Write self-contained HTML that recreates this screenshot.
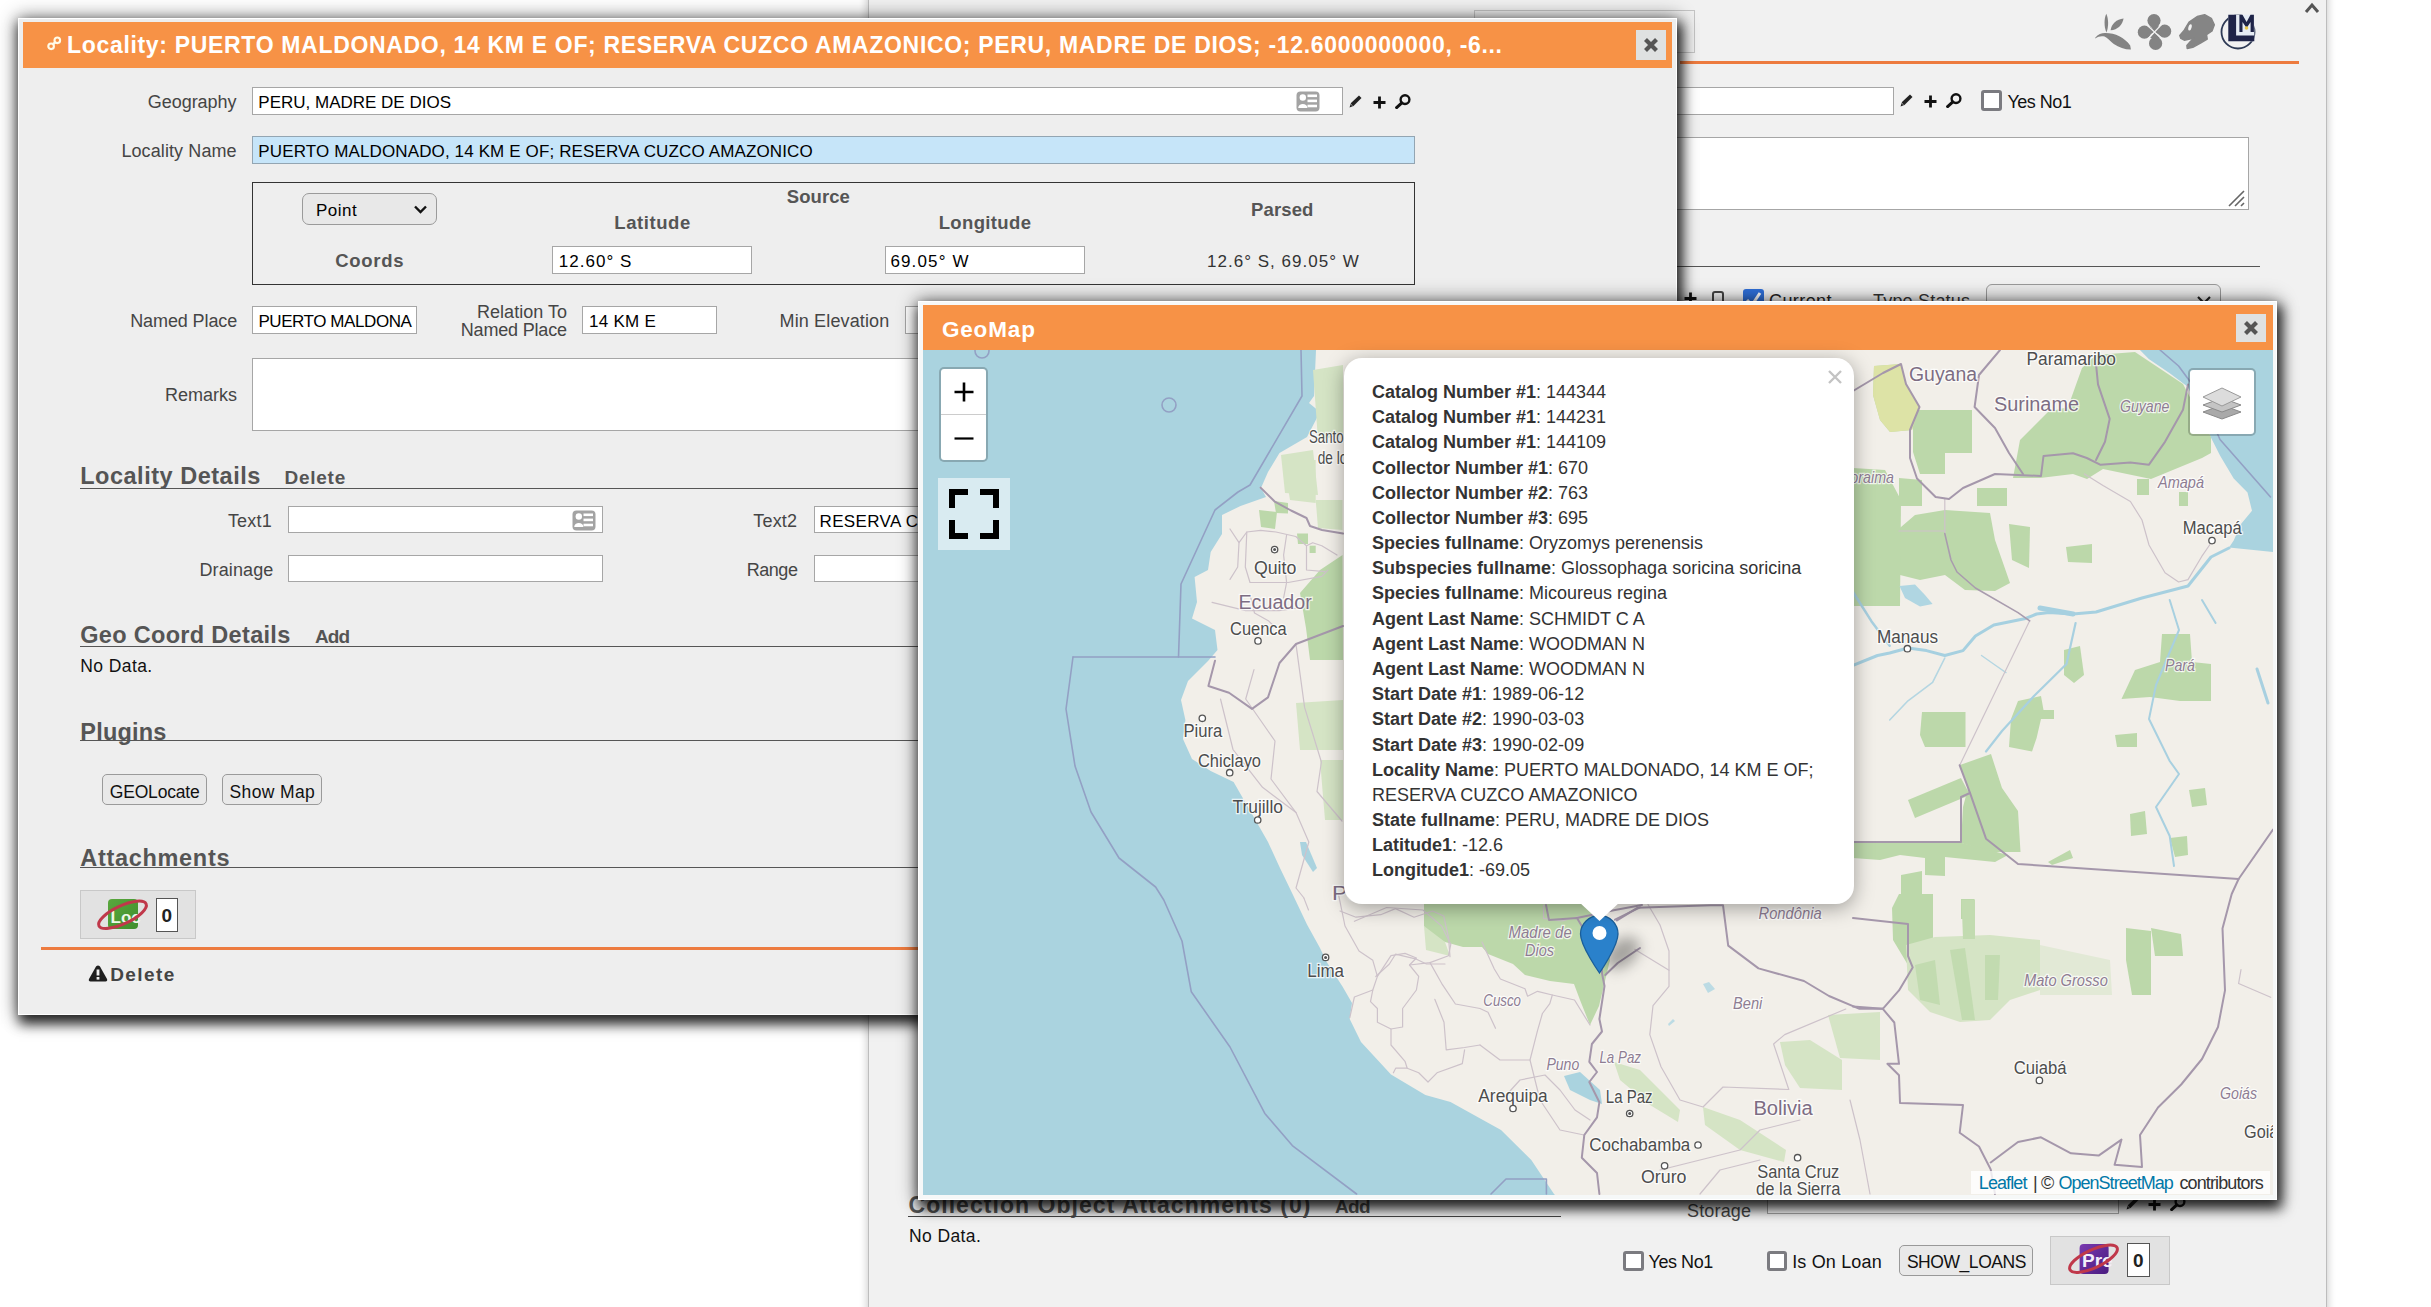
<!DOCTYPE html>
<html><head><meta charset="utf-8"><title>Specify</title>
<style>
html,body{margin:0;padding:0;width:2431px;height:1307px;overflow:hidden;background:#fff;}
body{position:relative;font-family:"Liberation Sans",sans-serif;}
.a{position:absolute;box-sizing:border-box;}
.t{position:absolute;white-space:pre;font-family:"Liberation Sans",sans-serif;}
</style></head><body>
<div class="a " style="left:867.5px;top:-10.0px;width:1459.5px;height:1330.0px;background:#f1f1f1;border-left:1.5px solid #bdbdbd;border-right:1.5px solid #bdbdbd;box-shadow:0 0 8px 1px rgba(0,0,0,0.2);"></div>
<div class="a " style="left:1474.0px;top:10.0px;width:221.0px;height:43.0px;border:1px solid #c4c4c4;background:#efefef;"></div>
<div class="a " style="left:1680.0px;top:61.0px;width:619.0px;height:2.5px;background:#ed7b3f;"></div>
<svg class="a" style="left:2304.0px;top:1.0px;" width="16.0" height="13.0" viewBox="0 0 16 13"><path d="M2 11 L8 4 L14 11" fill="none" stroke="#555" stroke-width="3"/></svg>
<svg class="a" style="left:2090.0px;top:8.0px;" width="90.0" height="47.0" viewBox="0 0 90 47"><g fill="#838383"><path d="M16.3 5.8 C18.6 11 18.8 19 16.4 24.6 C14 19 13.9 11 16.3 5.8 Z"/><path d="M20.6 22.3 C21.4 16 26.5 11 33.6 10.5 C32.4 17 27.6 21.8 20.6 22.3 Z"/><path d="M5.2 29.8 C8 26.2 12 25 15.2 25.1 C25 25 34.5 29.5 40.2 37.5 L40.9 41.5 C35 41.6 29 39.6 23.8 36 C20 33.2 17.2 29.6 14.6 28.6 C11 27.8 8 28.6 5.4 30.6 Z"/><circle cx="64" cy="12.6" r="6.6"/><circle cx="54.4" cy="24.2" r="6.6"/><circle cx="74.6" cy="23.2" r="6.6"/><circle cx="65.6" cy="35.4" r="6.6"/><path d="M58 14 L64.4 24 L70 15Z M60 18 L64.4 24 L56 29Z M68 17 L64.4 24 L73 29Z M60 30 L64.4 24 L70 30Z"/></g><path d="M57 17 L72 31 M71.5 16.5 L57.5 31.5" stroke="#f2f2f2" stroke-width="1.1"/></svg>
<svg class="a" style="left:2175.0px;top:8.0px;" width="90.0" height="47.0" viewBox="0 0 90 47"><path d="M4.8 27.4 L9.3 22.2 L14.1 14.1 L22.2 8.5 L29.6 6.7 L36.3 10.4 L39.3 16.7 L37 23 L31.5 26.7 L32.2 31.1 L25.9 34.8 L17.8 39.3 L12.2 40.4 L11.9 37.4 L15.6 33.3 L19.3 30 L9.3 32.2 L5.9 30.4 Z" fill="#858585" stroke="#858585" stroke-width="1.5" stroke-linejoin="round"/><ellipse cx="15" cy="19.4" rx="1.6" ry="3.2" transform="rotate(15 15 19.4)" fill="#f2f2f2"/><circle cx="63" cy="24" r="16.5" fill="none" stroke="#2e3a55" stroke-width="1.8"/><rect x="53.3" y="6.7" width="26" height="26.6" fill="#e6ecf4"/><path d="M53.3 6.7 H61.1 V27.4 H79.3 V33.3 H53.3 Z" fill="#1f2448"/><path d="M64.4 24 V6.7 H67.5 L71.6 14 L75.5 6.7 H78.9 V24 H75.6 V14 L71.6 20 L67.5 14 V24 Z" fill="#1f2448"/><circle cx="71.5" cy="20" r="1.8" fill="#e8c84a"/></svg>
<div class="a " style="left:1660.0px;top:87.0px;width:234.0px;height:28.0px;background:#fff;border:1px solid #a6a6a6;"></div>
<svg class="a" style="left:1899.0px;top:93.0px;" width="15.0" height="15.0" viewBox="0 0 15 15"><path d="M1.5 13.5 L3 9 L11 1.5 L13.5 4 L5.5 12 Z" fill="#222"/><path d="M3.2 10.5 L4.5 11.8" stroke="#eee" stroke-width="0.8"/></svg>
<svg class="a" style="left:1924.0px;top:95.0px;" width="13.0" height="13.0" viewBox="0 0 13 13"><path d="M6.5 0.5 V12.5 M0.5 6.5 H12.5" stroke="#111" stroke-width="2.8"/></svg>
<svg class="a" style="left:1946.0px;top:93.0px;" width="16.0" height="15.0" viewBox="0 0 16 15"><circle cx="10" cy="5.6" r="4.4" fill="none" stroke="#111" stroke-width="2.4"/><path d="M6.8 8.8 L1.6 13.6" stroke="#111" stroke-width="3" stroke-linecap="round"/></svg>
<div class="a " style="left:1981.0px;top:90.0px;width:21.0px;height:21.0px;border:3px solid #7b7b80;border-radius:3px;background:#fff;"></div>
<div class="t" style="left:2007.40px;top:91.80px;font-size:18.00px;line-height:20px;color:#111;letter-spacing:-0.499px;">Yes No1</div>
<div class="a " style="left:1660.0px;top:136.5px;width:589.0px;height:73.5px;background:#fff;border:1px solid #a6a6a6;"></div>
<svg class="a" style="left:2226.0px;top:188.0px;" width="20.0" height="20.0" viewBox="0 0 20 20"><path d="M3 18 L18 3 M9 18 L18 9 M15 18 L18 15" stroke="#666" stroke-width="1.6"/></svg>
<div class="a " style="left:1660.0px;top:265.5px;width:600.0px;height:1.5px;background:#555;"></div>
<svg class="a" style="left:1684.0px;top:292.0px;" width="13.0" height="13.0" viewBox="0 0 13 13"><path d="M6.5 0.5 V12.5 M0.5 6.5 H12.5" stroke="#111" stroke-width="2.8"/></svg>
<svg class="a" style="left:1710.0px;top:289.0px;" width="16.0" height="16.0" viewBox="0 0 16 16"><rect x="3" y="3" width="10" height="13" rx="2" fill="none" stroke="#444" stroke-width="2"/></svg>
<div class="a " style="left:1743.0px;top:289.0px;width:21.0px;height:21.0px;background:#2f6fd8;border-radius:3px;"></div>
<svg class="a" style="left:1743.0px;top:289.0px;" width="21.0" height="21.0" viewBox="0 0 21 21"><path d="M4 11 L9 16 L17 4" fill="none" stroke="#fff" stroke-width="3"/></svg>
<div class="t" style="left:1769.00px;top:290.50px;font-size:18.00px;line-height:20px;color:#222;letter-spacing:0.412px;">Current</div>
<div class="t" style="left:1873.00px;top:290.50px;font-size:18.00px;line-height:20px;color:#333;letter-spacing:0.194px;">Type Status</div>
<div class="a " style="left:1986.0px;top:284.0px;width:235.0px;height:32.0px;border:1px solid #999;border-radius:6px;background:#ebebeb;"></div>
<svg class="a" style="left:2196.0px;top:294.0px;" width="16.0" height="12.0" viewBox="0 0 16 12"><path d="M2 3 L8 9 L14 3" fill="none" stroke="#222" stroke-width="2.2"/></svg>
<div class="t" style="left:908.50px;top:1192.00px;font-size:23.00px;line-height:26px;color:#555555;font-weight:bold;letter-spacing:1.044px;">Collection Object Attachments (0)</div>
<div class="t" style="left:1335.00px;top:1196.00px;font-size:19.00px;line-height:21px;color:#555555;font-weight:bold;letter-spacing:-0.718px;">Add</div>
<div class="a " style="left:908.0px;top:1215.5px;width:653.0px;height:1.3px;background:#444;"></div>
<div class="t" style="left:909.00px;top:1226.30px;font-size:17.50px;line-height:20px;color:#111;letter-spacing:0.392px;">No Data.</div>
<div class="t" style="left:1687.00px;top:1201.00px;font-size:18.00px;line-height:20px;color:#454545;letter-spacing:0.161px;">Storage</div>
<div class="a " style="left:1766.7px;top:1186.0px;width:351.9px;height:27.5px;background:#fff;border:1px solid #a6a6a6;"></div>
<svg class="a" style="left:2125.0px;top:1196.0px;" width="15.0" height="15.0" viewBox="0 0 15 15"><path d="M1.5 13.5 L3 9 L11 1.5 L13.5 4 L5.5 12 Z" fill="#222"/><path d="M3.2 10.5 L4.5 11.8" stroke="#eee" stroke-width="0.8"/></svg>
<svg class="a" style="left:2148.0px;top:1198.0px;" width="13.0" height="13.0" viewBox="0 0 13 13"><path d="M6.5 0.5 V12.5 M0.5 6.5 H12.5" stroke="#111" stroke-width="2.8"/></svg>
<svg class="a" style="left:2170.0px;top:1196.0px;" width="16.0" height="15.0" viewBox="0 0 16 15"><circle cx="10" cy="5.6" r="4.4" fill="none" stroke="#111" stroke-width="2.4"/><path d="M6.8 8.8 L1.6 13.6" stroke="#111" stroke-width="3" stroke-linecap="round"/></svg>
<div class="a " style="left:1623.0px;top:1250.5px;width:20.5px;height:20.5px;border:3px solid #7b7b80;border-radius:3px;background:#fff;"></div>
<div class="t" style="left:1648.60px;top:1251.50px;font-size:18.00px;line-height:20px;color:#111;letter-spacing:-0.465px;">Yes No1</div>
<div class="a " style="left:1766.5px;top:1250.5px;width:20.5px;height:20.5px;border:3px solid #7b7b80;border-radius:3px;background:#fff;"></div>
<div class="t" style="left:1792.20px;top:1251.50px;font-size:18.00px;line-height:20px;color:#111;letter-spacing:0.160px;">Is On Loan</div>
<div class="a " style="left:1899.4px;top:1244.7px;width:133.9px;height:30.9px;border:1px solid #999;border-radius:5px;background:#e9e9e9;"></div>
<div class="t" style="left:1906.90px;top:1251.50px;font-size:17.50px;line-height:20px;color:#111;letter-spacing:-0.444px;">SHOW_LOANS</div>
<div class="a " style="left:2049.5px;top:1235.6px;width:120.2px;height:49.9px;border:1px solid #c8c8c8;background:#e2e2e2;"></div>
<svg class="a" style="left:2064.0px;top:1240.0px;" width="58.0" height="40.0" viewBox="0 0 58 40"><defs><linearGradient id="gp" x1="0" y1="0" x2="1" y2="1"><stop offset="0" stop-color="#7a3ab0"/><stop offset="1" stop-color="#4a1c80"/></linearGradient></defs><rect x="15.6" y="4" width="29" height="30" rx="4" fill="url(#gp)"/><text x="18" y="26.5" font-family="Liberation Sans" font-weight="bold" font-size="19" fill="#f4eefa">Pre</text><ellipse cx="29.5" cy="18.7" rx="26" ry="9" transform="rotate(-25 29.5 18.7)" fill="none" stroke="#c0384a" stroke-width="3"/></svg>
<div class="a " style="left:2127.2px;top:1243.4px;width:23.2px;height:34.1px;border:1.5px solid #555;background:#fff;"></div>
<div class="t" style="left:2133.00px;top:1250.00px;font-size:19.00px;line-height:21px;color:#222;font-weight:bold;">0</div>
<div class="a " style="left:18.0px;top:18.0px;width:1659.0px;height:997.0px;background:#eeeeee;border:1px solid #fff;box-shadow:0 0 18px 1px rgba(0,0,0,0.45), 3px 7px 12px 2px rgba(0,0,0,0.8);"></div>
<div class="a " style="left:23.0px;top:22.0px;width:1649.0px;height:46.0px;background:#f79246;"></div>
<svg class="a" style="left:44.0px;top:33.0px;" width="20.0" height="20.0" viewBox="0 0 20 20"><circle cx="7.1" cy="13.3" r="2.8" fill="none" stroke="#fffbe8" stroke-width="2.1"/><circle cx="13.3" cy="7.3" r="2.8" fill="none" stroke="#fffbe8" stroke-width="2.1"/><path d="M8.6 11.6 L11.6 8.9" stroke="#fffbe8" stroke-width="2.6"/></svg>
<div class="t" style="left:67.00px;top:32.00px;font-size:23.00px;line-height:26px;color:#fff;font-weight:bold;letter-spacing:0.677px;">Locality: PUERTO MALDONADO, 14 KM E OF; RESERVA CUZCO AMAZONICO; PERU, MADRE DE DIOS; -12.6000000000, -6...</div>
<div class="a " style="left:1636.0px;top:30.0px;width:30.0px;height:30.0px;background:#dfe1e1;"></div>
<svg class="a" style="left:1636.0px;top:30.0px;" width="30.0" height="30.0" viewBox="0 0 30 30"><path d="M9.5 9.5 L20.5 20.5 M20.5 9.5 L9.5 20.5" stroke="#555" stroke-width="4.2"/></svg>
<div class="t" style="left:147.70px;top:92.00px;font-size:18.00px;line-height:20px;color:#454545;letter-spacing:-0.021px;">Geography</div>
<div class="a " style="left:252.0px;top:87.0px;width:1091.0px;height:28.0px;background:#fff;border:1px solid #a6a6a6;"></div>
<div class="t" style="left:258.30px;top:93.00px;font-size:17.00px;line-height:19px;color:#000;">PERU, MADRE DE DIOS</div>
<svg class="a" style="left:1296.0px;top:91.0px;" width="24.0" height="21.0" viewBox="0 0 24 21"><rect x="0.5" y="0.5" width="23" height="20" rx="4" fill="#a3a3a3"/><circle cx="6.8" cy="6.5" r="3.2" fill="#fff"/><path d="M2.2 17 C2.2 11.5 11.4 11.5 11.4 17 Z" fill="#fff"/><rect x="11.5" y="3.5" width="9.5" height="2.6" fill="#fff"/><rect x="11.5" y="8.6" width="9.5" height="2.6" fill="#fff"/><rect x="11.5" y="13.7" width="9.5" height="2.6" fill="#fff"/></svg>
<svg class="a" style="left:1348.0px;top:94.0px;" width="15.0" height="15.0" viewBox="0 0 15 15"><path d="M1.5 13.5 L3 9 L11 1.5 L13.5 4 L5.5 12 Z" fill="#222"/><path d="M3.2 10.5 L4.5 11.8" stroke="#eee" stroke-width="0.8"/></svg>
<svg class="a" style="left:1373.0px;top:96.0px;" width="13.0" height="13.0" viewBox="0 0 13 13"><path d="M6.5 0.5 V12.5 M0.5 6.5 H12.5" stroke="#111" stroke-width="2.8"/></svg>
<svg class="a" style="left:1395.0px;top:94.0px;" width="16.0" height="15.0" viewBox="0 0 16 15"><circle cx="10" cy="5.6" r="4.4" fill="none" stroke="#111" stroke-width="2.4"/><path d="M6.8 8.8 L1.6 13.6" stroke="#111" stroke-width="3" stroke-linecap="round"/></svg>
<div class="t" style="left:121.40px;top:141.00px;font-size:18.00px;line-height:20px;color:#454545;letter-spacing:0.096px;">Locality Name</div>
<div class="a " style="left:252.0px;top:136.0px;width:1163.0px;height:28.0px;background:#c6e5f9;border:1px solid #93a5b2;"></div>
<div class="t" style="left:258.30px;top:142.00px;font-size:17.00px;line-height:19px;color:#000;letter-spacing:0.131px;">PUERTO MALDONADO, 14 KM E OF; RESERVA CUZCO AMAZONICO</div>
<div class="a " style="left:252.0px;top:182.0px;width:1163.0px;height:103.0px;border:1.5px solid #333;"></div>
<div class="a " style="left:302.0px;top:193.0px;width:135.0px;height:32.0px;border:1px solid #9a9a9a;border-radius:7px;background:#e8e8e8;"></div>
<div class="t" style="left:316.00px;top:201.00px;font-size:17.00px;line-height:19px;color:#000;letter-spacing:0.464px;">Point</div>
<svg class="a" style="left:413.0px;top:204.0px;" width="15.0" height="11.0" viewBox="0 0 15 11"><path d="M2 2.5 L7.5 8 L13 2.5" fill="none" stroke="#111" stroke-width="2.4"/></svg>
<div class="t" style="left:786.80px;top:186.40px;font-size:18.50px;line-height:21px;color:#555555;font-weight:bold;letter-spacing:0.057px;">Source</div>
<div class="t" style="left:614.30px;top:211.80px;font-size:18.50px;line-height:21px;color:#555555;font-weight:bold;letter-spacing:0.579px;">Latitude</div>
<div class="t" style="left:938.70px;top:212.00px;font-size:18.50px;line-height:21px;color:#555555;font-weight:bold;letter-spacing:0.363px;">Longitude</div>
<div class="t" style="left:1251.00px;top:199.00px;font-size:18.50px;line-height:21px;color:#555555;font-weight:bold;letter-spacing:0.141px;">Parsed</div>
<div class="t" style="left:335.20px;top:249.90px;font-size:18.50px;line-height:21px;color:#555555;font-weight:bold;letter-spacing:0.730px;">Coords</div>
<div class="a " style="left:552.0px;top:246.0px;width:200.0px;height:28.0px;background:#fff;border:1px solid #a6a6a6;"></div>
<div class="t" style="left:558.70px;top:252.30px;font-size:17.00px;line-height:19px;color:#000;letter-spacing:1.043px;">12.60° S</div>
<div class="a " style="left:885.0px;top:246.0px;width:200.0px;height:28.0px;background:#fff;border:1px solid #a6a6a6;"></div>
<div class="t" style="left:890.40px;top:252.20px;font-size:17.00px;line-height:19px;color:#000;letter-spacing:1.142px;">69.05° W</div>
<div class="t" style="left:1207.00px;top:252.20px;font-size:17.00px;line-height:19px;color:#333;letter-spacing:1.018px;">12.6° S, 69.05° W</div>
<div class="t" style="left:130.20px;top:311.10px;font-size:18.00px;line-height:20px;color:#454545;letter-spacing:-0.105px;">Named Place</div>
<div class="a " style="left:252.0px;top:306.0px;width:164.5px;height:27.5px;background:#fff;border:1px solid #a6a6a6;"></div>
<div class="t" style="left:258.40px;top:312.00px;font-size:17.00px;line-height:19px;color:#000;letter-spacing:-0.424px;">PUERTO MALDONA</div>
<div class="t" style="left:477.00px;top:301.70px;font-size:18.00px;line-height:20px;color:#454545;letter-spacing:0.027px;">Relation To</div>
<div class="t" style="left:460.80px;top:320.20px;font-size:18.00px;line-height:20px;color:#454545;letter-spacing:-0.185px;">Named Place</div>
<div class="a " style="left:582.0px;top:306.0px;width:135.0px;height:27.5px;background:#fff;border:1px solid #a6a6a6;"></div>
<div class="t" style="left:589.00px;top:312.00px;font-size:17.00px;line-height:19px;color:#000;letter-spacing:0.267px;">14 KM E</div>
<div class="t" style="left:779.60px;top:311.00px;font-size:18.00px;line-height:20px;color:#454545;letter-spacing:0.129px;">Min Elevation</div>
<div class="a " style="left:905.0px;top:306.0px;width:195.0px;height:27.5px;background:#fff;border:1px solid #a6a6a6;"></div>
<div class="t" style="left:165.00px;top:385.30px;font-size:18.00px;line-height:20px;color:#454545;">Remarks</div>
<div class="a " style="left:252.0px;top:357.5px;width:1163.0px;height:73.0px;background:#fff;border:1px solid #a6a6a6;"></div>
<div class="t" style="left:80.20px;top:463.40px;font-size:23.50px;line-height:26px;color:#555555;font-weight:bold;letter-spacing:0.520px;">Locality Details</div>
<div class="t" style="left:284.60px;top:467.40px;font-size:19.00px;line-height:21px;color:#555555;font-weight:bold;letter-spacing:0.716px;">Delete</div>
<div class="a " style="left:80.0px;top:487.5px;width:1570.0px;height:1.2px;background:#555;"></div>
<div class="t" style="left:227.90px;top:510.80px;font-size:18.00px;line-height:20px;color:#454545;letter-spacing:0.220px;">Text1</div>
<div class="a " style="left:288.0px;top:505.5px;width:315.0px;height:27.0px;background:#fff;border:1px solid #a6a6a6;"></div>
<svg class="a" style="left:572.0px;top:509.5px;" width="24.0" height="21.0" viewBox="0 0 24 21"><rect x="0.5" y="0.5" width="23" height="20" rx="4" fill="#a3a3a3"/><circle cx="6.8" cy="6.5" r="3.2" fill="#fff"/><path d="M2.2 17 C2.2 11.5 11.4 11.5 11.4 17 Z" fill="#fff"/><rect x="11.5" y="3.5" width="9.5" height="2.6" fill="#fff"/><rect x="11.5" y="8.6" width="9.5" height="2.6" fill="#fff"/><rect x="11.5" y="13.7" width="9.5" height="2.6" fill="#fff"/></svg>
<div class="t" style="left:753.20px;top:510.80px;font-size:18.00px;line-height:20px;color:#454545;letter-spacing:0.220px;">Text2</div>
<div class="a " style="left:814.0px;top:505.5px;width:316.0px;height:27.0px;background:#fff;border:1px solid #a6a6a6;"></div>
<div class="t" style="left:819.50px;top:511.80px;font-size:17.00px;line-height:19px;color:#000;letter-spacing:0.350px;">RESERVA CUZCO AMAZONICO</div>
<div class="t" style="left:199.50px;top:560.00px;font-size:18.00px;line-height:20px;color:#454545;letter-spacing:0.108px;">Drainage</div>
<div class="a " style="left:288.0px;top:554.5px;width:315.0px;height:27.0px;background:#fff;border:1px solid #a6a6a6;"></div>
<div class="t" style="left:746.80px;top:560.00px;font-size:18.00px;line-height:20px;color:#454545;letter-spacing:-0.486px;">Range</div>
<div class="a " style="left:814.0px;top:554.5px;width:316.0px;height:27.0px;background:#fff;border:1px solid #a6a6a6;"></div>
<div class="t" style="left:80.20px;top:622.40px;font-size:23.50px;line-height:26px;color:#555555;font-weight:bold;letter-spacing:0.318px;">Geo Coord Details</div>
<div class="t" style="left:314.90px;top:626.40px;font-size:19.00px;line-height:21px;color:#555555;font-weight:bold;letter-spacing:-0.868px;">Add</div>
<div class="a " style="left:80.0px;top:645.5px;width:1570.0px;height:1.2px;background:#555;"></div>
<div class="t" style="left:80.20px;top:655.80px;font-size:17.50px;line-height:20px;color:#111;letter-spacing:0.421px;">No Data.</div>
<div class="t" style="left:80.30px;top:718.70px;font-size:23.50px;line-height:26px;color:#555555;font-weight:bold;letter-spacing:0.207px;">Plugins</div>
<div class="a " style="left:80.0px;top:740.2px;width:1570.0px;height:1.2px;background:#555;"></div>
<div class="a " style="left:102.0px;top:774.2px;width:105.0px;height:31.3px;border:1px solid #9a9a9a;border-radius:5px;background:#e9e9e9;"></div>
<div class="t" style="left:109.80px;top:782.30px;font-size:17.50px;line-height:20px;color:#111;letter-spacing:-0.192px;">GEOLocate</div>
<div class="a " style="left:222.0px;top:774.2px;width:100.0px;height:31.3px;border:1px solid #9a9a9a;border-radius:5px;background:#e9e9e9;"></div>
<div class="t" style="left:229.50px;top:782.30px;font-size:17.50px;line-height:20px;color:#111;letter-spacing:0.373px;">Show Map</div>
<div class="t" style="left:80.30px;top:845.00px;font-size:23.50px;line-height:26px;color:#555555;font-weight:bold;letter-spacing:0.686px;">Attachments</div>
<div class="a " style="left:80.0px;top:867.2px;width:1570.0px;height:1.2px;background:#555;"></div>
<div class="a " style="left:80.3px;top:889.7px;width:115.7px;height:49.3px;border:1px solid #c8c8c8;background:#e2e2e2;"></div>
<svg class="a" style="left:93.0px;top:895.0px;" width="58.0" height="40.0" viewBox="0 0 58 40"><defs><linearGradient id="gl" x1="0" y1="0" x2="1" y2="1"><stop offset="0" stop-color="#5aa83e"/><stop offset="1" stop-color="#3f8f2c"/></linearGradient></defs><rect x="15" y="4" width="30" height="30" rx="4" fill="url(#gl)"/><text x="17.5" y="27.5" font-family="Liberation Sans" font-weight="bold" font-size="17" fill="#eef8e8">Loc</text><ellipse cx="29.5" cy="19.8" rx="26" ry="9" transform="rotate(-25 29.5 19.8)" fill="none" stroke="#c0384a" stroke-width="3"/></svg>
<div class="a " style="left:156.0px;top:898.0px;width:22.0px;height:34.0px;border:1.5px solid #555;background:#fff;"></div>
<div class="t" style="left:161.50px;top:905.00px;font-size:19.00px;line-height:21px;color:#222;font-weight:bold;">0</div>
<div class="a " style="left:41.0px;top:947.0px;width:1609.0px;height:3.0px;background:#ed7b3f;"></div>
<svg class="a" style="left:88.0px;top:964.0px;" width="20.0" height="18.0" viewBox="0 0 20 18"><path d="M10 1.5 C11.2 1.5 11.8 2.3 12.4 3.3 L19 15 C19.6 16.2 19 17.5 17.5 17.5 L2.5 17.5 C1 17.5 0.4 16.2 1 15 L7.6 3.3 C8.2 2.3 8.8 1.5 10 1.5Z" fill="#1e1e1e"/><rect x="8.6" y="5.5" width="2.8" height="6" fill="#eee"/><rect x="8.6" y="13" width="2.8" height="2.6" fill="#eee"/></svg>
<div class="t" style="left:110.20px;top:963.70px;font-size:19.00px;line-height:21px;color:#444;font-weight:bold;letter-spacing:1.436px;">Delete</div>
<div class="a " style="left:918.0px;top:301.0px;width:1359.0px;height:899.0px;background:#f6f8f8;border:1px solid #fff;box-shadow:0 0 18px 1px rgba(0,0,0,0.45), 3px 7px 12px 2px rgba(0,0,0,0.8);"></div>
<div class="a " style="left:923.0px;top:305.0px;width:1350.0px;height:45.0px;background:#f79246;"></div>
<div class="t" style="left:941.90px;top:316.90px;font-size:22.50px;line-height:25px;color:#fff;font-weight:bold;letter-spacing:0.848px;">GeoMap</div>
<div class="a " style="left:2236.0px;top:314.0px;width:30.0px;height:28.0px;background:#dfe1e1;"></div>
<svg class="a" style="left:2236.0px;top:314.0px;" width="30.0" height="28.0" viewBox="0 0 30 28"><path d="M9.5 8.5 L20.5 19.5 M20.5 8.5 L9.5 19.5" stroke="#555" stroke-width="4.2"/></svg>
<div class="a" style="left:923px;top:350px;width:1350px;height:844.5px;background:#aad3df;overflow:hidden;"><svg width="1350" height="845" viewBox="923 350 1350 845" style="display:block"><polygon points="1316,345 1316,350 1314,396 1309,403 1320,412 1307,437 1279.5,453 1268,472 1261,488 1266,497 1240.5,506 1222,515 1222,534 1210.7,552 1208,570 1194.6,577 1197,602 1192,618.5 1215,630 1217.5,650 1208,661 1188,681 1181,700 1185.4,720 1183,739 1192,759 1210.7,771 1233.6,782 1252,814 1268,842 1279.5,867 1293,895 1307,924.6 1320,948 1326.7,962 1342.8,987 1352,1003 1349.7,1019 1361,1042 1391,1074.4 1425.4,1095 1450.5,1102 1501,1130 1531.3,1160 1554,1194 1560,1200 2273,1200 2273,552 2229,547.5 2233.7,540.6 2240.6,524.5 2252,510.7 2247.5,492.4 2233.7,478.6 2220,455.6 2210.8,437.3 2187.8,386.7 2169.4,373 2148.8,359 2135,345" fill="#f2efe9" /><polygon points="1874,366 1901,364 1906,384 1919.5,407 1912,430 1890,432 1880,420 1873,395" fill="#bcd8aa" /><polygon points="1913,410 1972,410 1972,453 1945,453 1945,474 1920,474 1913,452" fill="#bcd8aa" /><polygon points="2013,478 2020,440 2048,412 2068,407 2082,368 2096,355 2135,352 2183,384 2211,437 2211,453 2202,458 2151,479 2103,469 2087,479 2073,474 2040,478" fill="#bcd8aa" /><polygon points="2137,479 2149,479 2149,495 2137,495" fill="#bcd8aa" /><polygon points="2179,492 2188,492 2188,506 2179,506" fill="#bcd8aa" /><polygon points="1977,488 2007,488 2007,506 1977,506" fill="#bcd8aa" /><polygon points="1894,533 1915,515 1945,510 1990,513 1995,540 2002,560 2010,583 1995,591 1965,590 1945,575 1920,580 1900,575" fill="#bcd8aa" /><polygon points="1853,468 1885,470 1901,500 1900,606 1853,606" fill="#bcd8aa" /><polygon points="2009,524 2030,527 2029,568 2012,560" fill="#bcd8aa" /><polygon points="2066,547 2092,544 2092,563 2068,562" fill="#bcd8aa" /><polygon points="1899,478 1922,480 1922,506 1899,506" fill="#bcd8aa" /><polygon points="1922,712 1965.5,712 1965.5,747 1925,747 1920,735" fill="#bcd8aa" /><polygon points="1908,800 1961,778 1970,795 1915,818" fill="#bcd8aa" /><polygon points="1960,765 1991,754 2002,788 2018,811 2020.5,852 1991,852 1961,843 1963,807 1968,788" fill="#bcd8aa" /><polygon points="1853,843 1962,843 2008,855 1995,862 1945,857 1945,876 1925,875 1925,858 1900,855 1880,860 1853,858" fill="#bcd8aa" /><polygon points="2018,701 2041,696 2043.5,710 2054,710 2054,719 2041,719 2036.6,738 2032,751.5 2009,747 2011,719" fill="#bcd8aa" /><polygon points="2064,650 2080,646 2084,675 2074,683 2064,675" fill="#bcd8aa" /><polygon points="2121.5,699 2135,670 2160,662 2162,634 2190,634 2192,662 2211,664 2211,701 2180,701 2150,697" fill="#bcd8aa" /><polygon points="2115,735 2137,733 2137,747 2117,747" fill="#bcd8aa" /><polygon points="2189,790 2205,788 2207,805 2192,807" fill="#bcd8aa" /><polygon points="2130,814 2145,811 2147,834 2131,836" fill="#bcd8aa" /><polygon points="2170,838 2187,836 2188,855 2175,857" fill="#bcd8aa" /><polygon points="2048,862 2070,850 2073,858 2052,865" fill="#bcd8aa" /><polygon points="1901,875 1922,871 1922,900 1901,900" fill="#bcd8aa" /><polygon points="1892,908 1899,894 1933,894 1933,958 1908,965 1893,940" fill="#bcd8aa" /><polygon points="2126,928 2151,931 2151,995 2132,995 2126,960" fill="#bcd8aa" /><polygon points="2151,928 2181,934 2183,956 2155,956" fill="#bcd8aa" /><polygon points="1961,899 1974.6,899 1974.6,919 1961,919" fill="#bcd8aa" /><polygon points="1424,904 1590,904 1605,935 1610,960 1605,981 1599,1006 1590,1025 1580,1000 1574,984 1550,981 1525,975 1513,964 1488,954 1482,947 1463,947 1445,942 1429,936 1424,926" fill="#bcd8aa" /><polygon points="1342.5,555 1320,570 1300,593 1306,628 1310,660 1343,660" fill="#bcd8aa" /><polygon points="1274,501 1288,503 1288,513.6 1276,513" fill="#bcd8aa" /><polygon points="1297,533.5 1308,533.5 1308,544 1298,544" fill="#bcd8aa" /><polygon points="1309.6,545.7 1315.7,545.7 1315.7,553 1309.6,553" fill="#bcd8aa" /><polygon points="1259,510 1277,512 1275,529 1261,527" fill="#bcd8aa" /><polygon points="1874,366 1901,364 1906,384 1919.5,407 1912,430 1890,432 1880,420 1873,395" fill="#dde3a6" /><polygon points="2040,945 2110,960 2112,995 2040,995" fill="#e2e9d6" /><polygon points="1906,945 1935,937 1990,935 2040,940 2040,990 2010,1000 1990,1020 1960,1022 1930,1012 1908,990" fill="#d5e4c5" /><polygon points="1614,1062 1640,1070 1680,1110 1678,1122 1650,1105 1620,1080" fill="#d5e4c5" /><polygon points="1703,1107 1740,1120 1786,1150 1784,1162 1740,1150 1705,1125" fill="#d5e4c5" /><polygon points="1780,1042 1810,1040 1842,1060 1842,1090 1800,1088 1785,1065" fill="#d5e4c5" /><polygon points="1828,1015 1880,1012 1880,1060 1840,1058" fill="#d5e4c5" /><polygon points="1313,370 1343,365 1343,435 1318,440" fill="#d5e4c5" /><polygon points="1281,455 1313,450 1318,495 1285,493" fill="#d5e4c5" /><polygon points="1283.6,460 1315.7,460 1315.7,503 1290,500" fill="#d5e4c5" /><polygon points="1315.7,500 1342.5,500 1342.5,530 1318,528" fill="#d5e4c5" /><polygon points="1296,703 1343,700 1343,750 1300,750" fill="#d5e4c5" /><polygon points="1320,760 1343,760 1343,820 1325,820" fill="#d5e4c5" /><polygon points="1424,926 1445,942 1450,956 1426,950" fill="#d5e4c5" /><polygon points="1703,984 1709,982 1715,989 1708,993" fill="#bcdbe4" /><polygon points="1668,1024 1673,1019 1675,1021 1669,1026" fill="#bcdbe4" /><polygon points="1950,950 1965,948 1975,1020 1962,1020" fill="#c2dbb0" /><polygon points="1985,955 2000,955 1998,1000 1985,1000" fill="#c2dbb0" /><polygon points="1961.6,900 1975,900 1975,939 1963,939" fill="#c2dbb0" /><polygon points="1915,965 1935,960 1940,1005 1920,1000" fill="#c2dbb0" /><polygon points="1564,1076 1580,1072 1600,1090 1602,1104 1590,1100 1570,1090" fill="#aad3df" /><polygon points="1300,842 1306,842 1317,868 1313,872 1302,855" fill="#aad3df" /><polygon points="1899.5,586 1915,584.5 1925,595 1932.6,604 1920,606.5 1905,598" fill="#b0d6e2" /><polyline points="2229,548 2211,557 2188,586 2142,598 2096,612 2073,614 2049,612.6 2036.6,614 2024.4,618.8 1993.8,625 1975.4,636 1963,650.6 1944.8,655.5 1926.5,650.6 1908,648 1889.7,653 1877.5,655.5 1853,665.3" fill="none" stroke="#a6d0e0" stroke-width="3" stroke-linejoin="round" stroke-linecap="round" /><polyline points="2040,608 2073,614" fill="none" stroke="#a6d0e0" stroke-width="5" stroke-linejoin="round" stroke-linecap="round" /><polyline points="1853,592 1871.4,621.2 1889.7,645.7" fill="none" stroke="#a8d0e0" stroke-width="2.5" stroke-linejoin="round" stroke-linecap="round" /><polyline points="1944.8,658 1932.6,682.4 1908,700.8 1889.7,720" fill="none" stroke="#b4d6e2" stroke-width="1.6" stroke-linejoin="round" stroke-linecap="round" /><polyline points="1981.5,655.5 1995,665 2006,672.6" fill="none" stroke="#b4d6e2" stroke-width="1.4" stroke-linejoin="round" stroke-linecap="round" /><polyline points="2075.6,623 2066.5,664 2034,696 2002,731 1986,751.5" fill="none" stroke="#a8d0e0" stroke-width="2.2" stroke-linejoin="round" stroke-linecap="round" /><polyline points="2169.7,600 2179,630 2156,685 2149,719 2169.7,761 2179,774 2156,807 2169.7,836 2174,866" fill="none" stroke="#a8d0e0" stroke-width="2" stroke-linejoin="round" stroke-linecap="round" /><polyline points="2257,669 2268,703" fill="none" stroke="#a8d0e0" stroke-width="3" stroke-linejoin="round" stroke-linecap="round" /><polyline points="2202,600 2215.6,623" fill="none" stroke="#a8d0e0" stroke-width="2" stroke-linejoin="round" stroke-linecap="round" /><polyline points="2084.5,474 2103,485.5 2130.4,501.5 2142,520 2149,545 2165,572.7 2178.6,582 2188,579.6 2201.6,556.7 2211,543" fill="none" stroke="#cdc2ca" stroke-width="1.2" stroke-linejoin="round" stroke-linecap="round" /><polyline points="2029.7,620.7 1959.7,765.3" fill="none" stroke="#cdc2ca" stroke-width="1.2" stroke-linejoin="round" stroke-linecap="round" /><polyline points="1944.8,499 1944.8,533.6" fill="none" stroke="#cdc2ca" stroke-width="1.2" stroke-linejoin="round" stroke-linecap="round" /><polyline points="1899,531 1945,531" fill="none" stroke="#cdc2ca" stroke-width="1.2" stroke-linejoin="round" stroke-linecap="round" /><polyline points="1648,904.5 1660,925 1669,951 1669,986.4 1653,1005.7 1649.8,1034.6 1661,1066.7 1680,1100 1703,1107 1723,1087 1788.8,1089.5 1773.6,1044 1784.7,1034.6 1845.8,1009" fill="none" stroke="#cdc2ca" stroke-width="1.2" stroke-linejoin="round" stroke-linecap="round" /><polyline points="1635,949.4 1669,970.3" fill="none" stroke="#cdc2ca" stroke-width="1.2" stroke-linejoin="round" stroke-linecap="round" /><polyline points="2241,969.7 2238.6,983.5 2270.7,997.3" fill="none" stroke="#cdc2ca" stroke-width="1.2" stroke-linejoin="round" stroke-linecap="round" /><polyline points="1338.4,893.8 1345,926 1359,951 1372.8,960.3 1377.4,976.4 1372.8,990 1354.4,997 1349.8,1017.7" fill="none" stroke="#cdc2ca" stroke-width="1.2" stroke-linejoin="round" stroke-linecap="round" /><polyline points="1372.8,990 1370.5,1001.6 1377.4,1008.5 1377.4,1022.3 1391,1029 1402.6,1027 1402.6,1008.5 1416.4,990 1418.7,976.4 1409.5,965 1416.4,958 1405,953.4 1391,955.7 1377.4,976.4" fill="none" stroke="#cdc2ca" stroke-width="1.2" stroke-linejoin="round" stroke-linecap="round" /><polyline points="1409.5,965 1430,962.6 1448.5,955.7 1450.8,944.3 1441.6,926 1423,910 1386.6,907.5 1354.4,921.3" fill="none" stroke="#cdc2ca" stroke-width="1.2" stroke-linejoin="round" stroke-linecap="round" /><polyline points="1430,962.6 1441.6,983.3 1455.4,1004 1480,1008.5 1488,1012.2 1495.5,1028.3" fill="none" stroke="#cdc2ca" stroke-width="1.2" stroke-linejoin="round" stroke-linecap="round" /><polyline points="1434.8,999.3 1444,1022.3 1446.2,1049.8 1464.6,1047.5 1480,1045" fill="none" stroke="#cdc2ca" stroke-width="1.2" stroke-linejoin="round" stroke-linecap="round" /><polyline points="1391,1029 1391,1045 1405,1061.3 1407.2,1068.2 1395.7,1068.2 1393.4,1072.8" fill="none" stroke="#cdc2ca" stroke-width="1.2" stroke-linejoin="round" stroke-linecap="round" /><polyline points="1407.2,1068.2 1418.7,1072.8 1428,1082 1437,1072.8 1462.3,1063.6 1464.6,1049.8" fill="none" stroke="#cdc2ca" stroke-width="1.2" stroke-linejoin="round" stroke-linecap="round" /><polyline points="1304,898.4 1308.5,910" fill="none" stroke="#cdc2ca" stroke-width="1.2" stroke-linejoin="round" stroke-linecap="round" /><polyline points="1340,911 1356,917.2 1380.7,914.7 1395.5,908.6 1414,917.2 1432.6,911 1443.7,916 1448.6,938 1450,956.7" fill="none" stroke="#cdc2ca" stroke-width="1.2" stroke-linejoin="round" stroke-linecap="round" /><polyline points="1445,964 1426.4,964 1416.5,959.2 1395.5,954.2 1389.4,964 1375.8,976.5" fill="none" stroke="#cdc2ca" stroke-width="1.2" stroke-linejoin="round" stroke-linecap="round" /><polyline points="1482,942 1494.3,969 1500.4,979 1525,988.8 1527.6,996.2 1537.5,991.3 1552.3,995 1549.8,1003.6 1542.4,1013.5 1537.5,1030.7 1530,1060 1540,1100 1560,1130 1584,1135" fill="none" stroke="#cdc2ca" stroke-width="1.2" stroke-linejoin="round" stroke-linecap="round" /><polyline points="1552.3,995 1574.5,1000 1590,1025" fill="none" stroke="#cdc2ca" stroke-width="1.2" stroke-linejoin="round" stroke-linecap="round" /><polyline points="1543.6,905 1543.6,918.4 1562,921 1580.6,916" fill="none" stroke="#cdc2ca" stroke-width="1.2" stroke-linejoin="round" stroke-linecap="round" /><polyline points="1230,529 1239,542.7 1246.8,532 1260.6,530.4 1276,532 1295.8,536.5 1306.5,545.7 1312.7,542.7 1321.8,545.7 1337,555" fill="none" stroke="#cdc2ca" stroke-width="1.2" stroke-linejoin="round" stroke-linecap="round" /><polyline points="1246.8,532 1245.3,567 1250,582.5 1262,582.5 1288.2,582.5 1321.8,576.3 1328,570" fill="none" stroke="#cdc2ca" stroke-width="1.2" stroke-linejoin="round" stroke-linecap="round" /><polyline points="1286.6,535 1283.6,555 1286.6,582.5 1283.6,597.8" fill="none" stroke="#cdc2ca" stroke-width="1.2" stroke-linejoin="round" stroke-linecap="round" /><polyline points="1306.5,545.7 1306.5,570 1325,571.7" fill="none" stroke="#cdc2ca" stroke-width="1.2" stroke-linejoin="round" stroke-linecap="round" /><polyline points="1239,542.7 1237.7,567 1230,579.4" fill="none" stroke="#cdc2ca" stroke-width="1.2" stroke-linejoin="round" stroke-linecap="round" /><polyline points="1250,594.7 1254.5,613 1268.3,620.7 1276,628.4" fill="none" stroke="#cdc2ca" stroke-width="1.2" stroke-linejoin="round" stroke-linecap="round" /><polyline points="1212,602.3 1245.7,610.7 1279,610.7 1309,606.5" fill="none" stroke="#cdc2ca" stroke-width="1.2" stroke-linejoin="round" stroke-linecap="round" /><polyline points="1254,669.6 1245.7,699 1275,741 1271,779 1296,812.6 1308.8,842 1296,888 1304,898" fill="none" stroke="#cdc2ca" stroke-width="1.2" stroke-linejoin="round" stroke-linecap="round" /><polyline points="1220.5,699 1233,749.5 1262.5,787.3 1296,812.6" fill="none" stroke="#cdc2ca" stroke-width="1.2" stroke-linejoin="round" stroke-linecap="round" /><polyline points="1296,644.4 1304.6,707.4 1321.4,762 1317,791.5 1342,821" fill="none" stroke="#cdc2ca" stroke-width="1.2" stroke-linejoin="round" stroke-linecap="round" /><polyline points="1500,1102 1520,1080 1545,1075 1560,1090 1575,1110 1590,1120" fill="none" stroke="#cdc2ca" stroke-width="1.2" stroke-linejoin="round" stroke-linecap="round" /><polyline points="1480,1045 1500,1060 1530,1060" fill="none" stroke="#cdc2ca" stroke-width="1.2" stroke-linejoin="round" stroke-linecap="round" /><polyline points="1660,1170 1700,1160 1740,1150 1760,1130 1800,1120" fill="none" stroke="#cdc2ca" stroke-width="1.2" stroke-linejoin="round" stroke-linecap="round" /><polyline points="1700,1194 1720,1170 1760,1160" fill="none" stroke="#cdc2ca" stroke-width="1.2" stroke-linejoin="round" stroke-linecap="round" /><polyline points="1850,1100 1860,1140 1870,1194" fill="none" stroke="#cdc2ca" stroke-width="1.2" stroke-linejoin="round" stroke-linecap="round" /><polyline points="1853,391 1883,373 1901,364 1906,384 1919.5,407 1910,430 1910,458 1917,478.5 1935.6,497 1949,499 1963,488 1995,474 2018,475 2041,476 2043.5,456 2073,453.3 2086.8,458 2100.6,464.8 2130.4,462.5 2148.8,464.8 2165,441.8 2183,409.7 2188,384.4" fill="none" stroke="#a597ab" stroke-width="2" stroke-linejoin="round" stroke-linecap="round" /><polyline points="2000,350 1979,375 1974.6,407 1995,428 2009,453 2023,474" fill="none" stroke="#a597ab" stroke-width="2" stroke-linejoin="round" stroke-linecap="round" /><polyline points="2096,363.8 2098,384.4 2109.7,418.9 2105,441.8 2096,460" fill="none" stroke="#a597ab" stroke-width="2" stroke-linejoin="round" stroke-linecap="round" /><polyline points="1959.7,765.3 1970,792.8 1986,838.7 2018,864 2238.6,879 2273,829.5" fill="none" stroke="#a597ab" stroke-width="2" stroke-linejoin="round" stroke-linecap="round" /><polyline points="1853,842 1961,842 1961,797 1970,793" fill="none" stroke="#a597ab" stroke-width="2" stroke-linejoin="round" stroke-linecap="round" /><polyline points="1853,918 1908,924 1908,956 1912.7,967.4 1899,990.4 1882.8,1008.8 1853,1006.5" fill="none" stroke="#a597ab" stroke-width="2" stroke-linejoin="round" stroke-linecap="round" /><polyline points="1882.8,1008.8 1894.3,1022.5 1899,1063.8 1887.4,1063.8 1899,1075.3 1900,1103 1963,1105 1959.7,1132.7 1979,1146.5 1990.7,1169.4 1995,1194" fill="none" stroke="#a597ab" stroke-width="2" stroke-linejoin="round" stroke-linecap="round" /><polyline points="1990.7,1162.5 2018,1142 2041,1137.3 2071,1153.3 2098.6,1155.6 2121.5,1139.6 2114.6,1164.8 2142,1167 2140,1135 2158,1107.5 2181.2,1084.5 2202,1059 2218,1027 2225,990.4 2222.5,928.4 2231.7,894 2238.6,879" fill="none" stroke="#a597ab" stroke-width="2" stroke-linejoin="round" stroke-linecap="round" /><polyline points="1617,920.4 1637.3,907.8 1710.5,905.2 1723,905.2 1728.2,945.6 1758.5,968.4 1804,981 1829,996 1859.5,1008.8 1882.8,1008.8" fill="none" stroke="#a597ab" stroke-width="2" stroke-linejoin="round" stroke-linecap="round" /><polyline points="1546,905 1549,920 1577,918 1602,960 1602,973.4 1604.5,986 1599.4,1019 1602,1031.5 1591.9,1044 1589.3,1061.8 1597,1072 1589.3,1082 1599.4,1102.2 1597,1117.3 1584.3,1135 1581.8,1157.7 1597,1173 1599.4,1194" fill="none" stroke="#a597ab" stroke-width="2" stroke-linejoin="round" stroke-linecap="round" /><polyline points="1577,918 1615,910 1642,905" fill="none" stroke="#a597ab" stroke-width="2" stroke-linejoin="round" stroke-linecap="round" /><polyline points="1260.6,487.6 1274.4,501.3 1291,510.5 1306.5,518 1310,526 1322,530 1343,533.5" fill="none" stroke="#a597ab" stroke-width="2" stroke-linejoin="round" stroke-linecap="round" /><polyline points="1215,660.7 1208.4,686 1229,692.8 1252,708.9 1268,697.4 1279.5,663 1296,644 1343,626" fill="none" stroke="#a597ab" stroke-width="2" stroke-linejoin="round" stroke-linecap="round" /><polyline points="1615,919.7 1640,907.3" fill="none" stroke="#a597ab" stroke-width="2" stroke-linejoin="round" stroke-linecap="round" /><polyline points="1605.3,975 1617.7,963 1640,948" fill="none" stroke="#a597ab" stroke-width="2" stroke-linejoin="round" stroke-linecap="round" /><polyline points="1944.8,533.6 1951,560 1957,572 1975.4,588 2018,612.6 2029.7,620.8" fill="none" stroke="#a99cae" stroke-width="1.6" stroke-linejoin="round" stroke-linecap="round" /><polyline points="1301,350 1302,396 1250,485 1238,492 1215,510 1181,584 1178.5,657" fill="none" stroke="#93a0c4" stroke-width="1.6" stroke-linejoin="round" stroke-linecap="round" /><polyline points="1073,657 1215,657" fill="none" stroke="#93a0c4" stroke-width="1.6" stroke-linejoin="round" stroke-linecap="round" /><polyline points="1073,657 1066,709 1075,766 1091,812 1119,858 1155.6,887 1163.8,900 1182,941 1191.3,991.8 1230,1047 1264.8,1113.4 1292.3,1145.6 1356.6,1194" fill="none" stroke="#93a0c4" stroke-width="1.6" stroke-linejoin="round" stroke-linecap="round" /><polyline points="1491,1194 1506,1179 1546.4,1179 1546.4,1194" fill="none" stroke="#93a0c4" stroke-width="1.6" stroke-linejoin="round" stroke-linecap="round" /><polyline points="2160,350 2178.6,366 2200,395 2220,439.5 2270.5,497" fill="none" stroke="#93a0c4" stroke-width="1.6" stroke-linejoin="round" stroke-linecap="round" /><circle cx="1169" cy="405" r="7" fill="none" stroke="#93a0c4" stroke-width="1.6"/><circle cx="982" cy="351" r="7" fill="none" stroke="#93a0c4" stroke-width="1.6"/><text x="1309" y="442.9" font-family="Liberation Sans" font-size="17.5" fill="#4d4d4d" stroke="#fff" stroke-width="2.5" stroke-opacity="0.75" paint-order="stroke" textLength="91" lengthAdjust="spacingAndGlyphs">Santo Domingo</text><text x="1317.7" y="463.5" font-family="Liberation Sans" font-size="17.5" fill="#4d4d4d" stroke="#fff" stroke-width="2.5" stroke-opacity="0.75" paint-order="stroke" textLength="102.3" lengthAdjust="spacingAndGlyphs">de los Colorados</text><text x="1254" y="573.7" font-family="Liberation Sans" font-size="17.5" fill="#4d4d4d" stroke="#fff" stroke-width="2.5" stroke-opacity="0.75" paint-order="stroke" textLength="42.3" lengthAdjust="spacingAndGlyphs">Quito</text><text x="1230" y="634.7" font-family="Liberation Sans" font-size="17.5" fill="#4d4d4d" stroke="#fff" stroke-width="2.5" stroke-opacity="0.75" paint-order="stroke" textLength="56.7" lengthAdjust="spacingAndGlyphs">Cuenca</text><text x="1183.4" y="736.5" font-family="Liberation Sans" font-size="17.5" fill="#4d4d4d" stroke="#fff" stroke-width="2.5" stroke-opacity="0.75" paint-order="stroke" textLength="38.9" lengthAdjust="spacingAndGlyphs">Piura</text><text x="1198" y="766.7" font-family="Liberation Sans" font-size="17.5" fill="#4d4d4d" stroke="#fff" stroke-width="2.5" stroke-opacity="0.75" paint-order="stroke" textLength="63" lengthAdjust="spacingAndGlyphs">Chiclayo</text><text x="1232.5" y="813.3" font-family="Liberation Sans" font-size="17.5" fill="#4d4d4d" stroke="#fff" stroke-width="2.5" stroke-opacity="0.75" paint-order="stroke" textLength="50.5" lengthAdjust="spacingAndGlyphs">Trujillo</text><text x="1307.2" y="976.9" font-family="Liberation Sans" font-size="17.5" fill="#4d4d4d" stroke="#fff" stroke-width="2.5" stroke-opacity="0.75" paint-order="stroke" textLength="36.8" lengthAdjust="spacingAndGlyphs">Lima</text><text x="1478.3" y="1102.2" font-family="Liberation Sans" font-size="17.5" fill="#4d4d4d" stroke="#fff" stroke-width="2.5" stroke-opacity="0.75" paint-order="stroke" textLength="69.4" lengthAdjust="spacingAndGlyphs">Arequipa</text><text x="1605.8" y="1103.4" font-family="Liberation Sans" font-size="17.5" fill="#4d4d4d" stroke="#fff" stroke-width="2.5" stroke-opacity="0.75" paint-order="stroke" textLength="46.7" lengthAdjust="spacingAndGlyphs">La Paz</text><text x="1589.3" y="1151.4" font-family="Liberation Sans" font-size="17.5" fill="#4d4d4d" stroke="#fff" stroke-width="2.5" stroke-opacity="0.75" paint-order="stroke" textLength="101" lengthAdjust="spacingAndGlyphs">Cochabamba</text><text x="1641" y="1183" font-family="Liberation Sans" font-size="17.5" fill="#4d4d4d" stroke="#fff" stroke-width="2.5" stroke-opacity="0.75" paint-order="stroke" textLength="45.5" lengthAdjust="spacingAndGlyphs">Oruro</text><text x="1757.2" y="1177.9" font-family="Liberation Sans" font-size="17.5" fill="#4d4d4d" stroke="#fff" stroke-width="2.5" stroke-opacity="0.75" paint-order="stroke" textLength="82.1" lengthAdjust="spacingAndGlyphs">Santa Cruz</text><text x="1756" y="1195" font-family="Liberation Sans" font-size="17.5" fill="#4d4d4d" stroke="#fff" stroke-width="2.5" stroke-opacity="0.75" paint-order="stroke" textLength="84.5" lengthAdjust="spacingAndGlyphs">de la Sierra</text><text x="1877" y="642.5" font-family="Liberation Sans" font-size="17.5" fill="#4d4d4d" stroke="#fff" stroke-width="2.5" stroke-opacity="0.75" paint-order="stroke" textLength="61" lengthAdjust="spacingAndGlyphs">Manaus</text><text x="2182.8" y="533.7" font-family="Liberation Sans" font-size="17.5" fill="#4d4d4d" stroke="#fff" stroke-width="2.5" stroke-opacity="0.75" paint-order="stroke" textLength="59" lengthAdjust="spacingAndGlyphs">Macapá</text><text x="2026.5" y="365" font-family="Liberation Sans" font-size="17.5" fill="#4d4d4d" stroke="#fff" stroke-width="2.5" stroke-opacity="0.75" paint-order="stroke" textLength="89.5" lengthAdjust="spacingAndGlyphs">Paramaribo</text><text x="2013.7" y="1074" font-family="Liberation Sans" font-size="17.5" fill="#4d4d4d" stroke="#fff" stroke-width="2.5" stroke-opacity="0.75" paint-order="stroke" textLength="52.8" lengthAdjust="spacingAndGlyphs">Cuiabá</text><text x="2244" y="1137.7" font-family="Liberation Sans" font-size="17.5" fill="#4d4d4d" stroke="#fff" stroke-width="2.5" stroke-opacity="0.75" paint-order="stroke" textLength="56" lengthAdjust="spacingAndGlyphs">Goiânia</text><circle cx="1274.6" cy="549.6" r="3.2" fill="#fff" stroke="#555" stroke-width="1.3"/><circle cx="1274.6" cy="549.6" r="1.5" fill="#555"/><circle cx="1258" cy="640.9" r="3.2" fill="#fff" stroke="#555" stroke-width="1.3"/><circle cx="1202.3" cy="718.3" r="3.2" fill="#fff" stroke="#555" stroke-width="1.3"/><circle cx="1229.7" cy="772.7" r="3.2" fill="#fff" stroke="#555" stroke-width="1.3"/><circle cx="1257.7" cy="820" r="3.2" fill="#fff" stroke="#555" stroke-width="1.3"/><circle cx="1325.6" cy="957.4" r="3.2" fill="#fff" stroke="#555" stroke-width="1.3"/><circle cx="1325.6" cy="957.4" r="1.5" fill="#555"/><circle cx="1513" cy="1108.5" r="3.2" fill="#fff" stroke="#555" stroke-width="1.3"/><circle cx="1629.7" cy="1113.5" r="3.2" fill="#fff" stroke="#555" stroke-width="1.3"/><circle cx="1629.7" cy="1113.5" r="1.5" fill="#555"/><circle cx="1698" cy="1145" r="3.2" fill="#fff" stroke="#555" stroke-width="1.3"/><circle cx="1664.6" cy="1165.8" r="3.2" fill="#fff" stroke="#555" stroke-width="1.3"/><circle cx="1797.6" cy="1157.7" r="3.2" fill="#fff" stroke="#555" stroke-width="1.3"/><circle cx="1907.4" cy="648.7" r="3.2" fill="#fff" stroke="#555" stroke-width="1.3"/><circle cx="2212" cy="540.6" r="3.2" fill="#fff" stroke="#555" stroke-width="1.3"/><circle cx="2039.4" cy="1080.4" r="3.2" fill="#fff" stroke="#555" stroke-width="1.3"/><text x="1238.5" y="609.2" font-family="Liberation Sans" font-size="19.5" fill="#7d6d83" stroke="#fff" stroke-width="2.5" stroke-opacity="0.75" paint-order="stroke" textLength="73.3" lengthAdjust="spacingAndGlyphs">Ecuador</text><text x="1909" y="381" font-family="Liberation Sans" font-size="19.5" fill="#7d6d83" stroke="#fff" stroke-width="2.5" stroke-opacity="0.75" paint-order="stroke" textLength="68" lengthAdjust="spacingAndGlyphs">Guyana</text><text x="1994" y="410.8" font-family="Liberation Sans" font-size="19.5" fill="#7d6d83" stroke="#fff" stroke-width="2.5" stroke-opacity="0.75" paint-order="stroke" textLength="85" lengthAdjust="spacingAndGlyphs">Suriname</text><text x="1753.4" y="1114.8" font-family="Liberation Sans" font-size="19.5" fill="#7d6d83" stroke="#fff" stroke-width="2.5" stroke-opacity="0.75" paint-order="stroke" textLength="59.4" lengthAdjust="spacingAndGlyphs">Bolivia</text><text x="1332" y="900" font-family="Liberation Sans" font-size="19.5" fill="#7d6d83" stroke="#fff" stroke-width="2.5" stroke-opacity="0.75" paint-order="stroke" textLength="48" lengthAdjust="spacingAndGlyphs">Perú</text><text x="1840" y="483" font-family="Liberation Sans" font-size="16.5" fill="#8e7d93" font-style="italic" stroke="#fff" stroke-width="2.5" stroke-opacity="0.75" paint-order="stroke" textLength="54" lengthAdjust="spacingAndGlyphs">Roraima</text><text x="2120" y="412" font-family="Liberation Sans" font-size="16.5" fill="#8e7d93" font-style="italic" stroke="#fff" stroke-width="2.5" stroke-opacity="0.75" paint-order="stroke" textLength="49.4" lengthAdjust="spacingAndGlyphs">Guyane</text><text x="2158" y="487.8" font-family="Liberation Sans" font-size="16.5" fill="#8e7d93" font-style="italic" stroke="#fff" stroke-width="2.5" stroke-opacity="0.75" paint-order="stroke" textLength="46" lengthAdjust="spacingAndGlyphs">Amapá</text><text x="2165" y="671" font-family="Liberation Sans" font-size="16.5" fill="#8e7d93" font-style="italic" stroke="#fff" stroke-width="2.5" stroke-opacity="0.75" paint-order="stroke" textLength="30" lengthAdjust="spacingAndGlyphs">Pará</text><text x="2024" y="985.8" font-family="Liberation Sans" font-size="16.5" fill="#8e7d93" font-style="italic" stroke="#fff" stroke-width="2.5" stroke-opacity="0.75" paint-order="stroke" textLength="83.8" lengthAdjust="spacingAndGlyphs">Mato Grosso</text><text x="2220" y="1099.4" font-family="Liberation Sans" font-size="16.5" fill="#8e7d93" font-style="italic" stroke="#fff" stroke-width="2.5" stroke-opacity="0.75" paint-order="stroke" textLength="37" lengthAdjust="spacingAndGlyphs">Goiás</text><text x="1758.5" y="919" font-family="Liberation Sans" font-size="16.5" fill="#8e7d93" font-style="italic" stroke="#fff" stroke-width="2.5" stroke-opacity="0.75" paint-order="stroke" textLength="63.1" lengthAdjust="spacingAndGlyphs">Rondônia</text><text x="1508.6" y="938" font-family="Liberation Sans" font-size="16.5" fill="#8e7d93" font-style="italic" stroke="#fff" stroke-width="2.5" stroke-opacity="0.75" paint-order="stroke" textLength="63.1" lengthAdjust="spacingAndGlyphs">Madre de</text><text x="1525" y="955.7" font-family="Liberation Sans" font-size="16.5" fill="#8e7d93" font-style="italic" stroke="#fff" stroke-width="2.5" stroke-opacity="0.75" paint-order="stroke" textLength="29" lengthAdjust="spacingAndGlyphs">Dios</text><text x="1483.3" y="1006.2" font-family="Liberation Sans" font-size="16.5" fill="#8e7d93" font-style="italic" stroke="#fff" stroke-width="2.5" stroke-opacity="0.75" paint-order="stroke" textLength="37.7" lengthAdjust="spacingAndGlyphs">Cusco</text><text x="1733" y="1008.8" font-family="Liberation Sans" font-size="16.5" fill="#8e7d93" font-style="italic" stroke="#fff" stroke-width="2.5" stroke-opacity="0.75" paint-order="stroke" textLength="29.3" lengthAdjust="spacingAndGlyphs">Beni</text><text x="1599.4" y="1063" font-family="Liberation Sans" font-size="16.5" fill="#8e7d93" font-style="italic" stroke="#fff" stroke-width="2.5" stroke-opacity="0.75" paint-order="stroke" textLength="41.6" lengthAdjust="spacingAndGlyphs">La Paz</text><text x="1546.4" y="1069.8" font-family="Liberation Sans" font-size="16.5" fill="#8e7d93" font-style="italic" stroke="#fff" stroke-width="2.5" stroke-opacity="0.75" paint-order="stroke" textLength="32.9" lengthAdjust="spacingAndGlyphs">Puno</text></svg></div>
<div class="a " style="left:938.9px;top:367.1px;width:48.9px;height:94.7px;border:2px solid rgba(0,0,0,0.2);border-radius:5px;background:#fff;background-clip:padding-box;"></div>
<div class="a " style="left:941.0px;top:413.8px;width:44.8px;height:1.0px;background:#ccc;"></div>
<svg class="a" style="left:953.0px;top:381.0px;" width="22.0" height="22.0" viewBox="0 0 22 22"><path d="M11 1.5 V20.5 M1.5 11 H20.5" stroke="#000" stroke-width="2.6"/></svg>
<svg class="a" style="left:953.0px;top:433.0px;" width="22.0" height="10.0" viewBox="0 0 22 10"><path d="M1.5 5.5 H20.5" stroke="#000" stroke-width="2.2"/></svg>
<div class="a " style="left:937.9px;top:478.0px;width:72.3px;height:71.6px;background:rgba(255,255,255,0.55);"></div>
<svg class="a" style="left:949.0px;top:489.0px;" width="50.0" height="50.0" viewBox="0 0 50 50"><path d="M3 19 V3 H19 M31 3 H47 V19 M47 31 V47 H31 M19 47 H3 V31" fill="none" stroke="#000" stroke-width="6"/></svg>
<div class="a " style="left:2188.3px;top:367.9px;width:67.6px;height:68.3px;border:2px solid rgba(0,0,0,0.2);border-radius:5px;background:#fff;background-clip:padding-box;"></div>
<svg class="a" style="left:2200.0px;top:385.0px;" width="44.0" height="35.0" viewBox="0 0 44 35"><path d="M22 20 L41 27 L22 34 L3 27Z" fill="#a9a9a9" stroke="#8a8a8a" stroke-width="1"/><path d="M22 13 L41 20 L22 27 L3 20Z" fill="#c4c4c4" stroke="#8a8a8a" stroke-width="1"/><path d="M22 3 L41 12 L22 21 L3 12Z" fill="#dcdcdc" stroke="#9a9a9a" stroke-width="1"/></svg>
<div class="a " style="left:1971.3px;top:1171.0px;width:298.7px;height:23.0px;background:rgba(255,255,255,0.8);"></div>
<div class="t" style="left:1978.80px;top:1172.90px;font-size:18.00px;line-height:20px;color:#0078a8;letter-spacing:-0.906px;">Leaflet</div>
<div class="t" style="left:2033.00px;top:1172.90px;font-size:18.00px;line-height:20px;color:#333;">|</div>
<div class="t" style="left:2041.00px;top:1172.90px;font-size:18.00px;line-height:20px;color:#333;">©</div>
<div class="t" style="left:2058.40px;top:1172.90px;font-size:18.00px;line-height:20px;color:#0078a8;letter-spacing:-0.965px;">OpenStreetMap</div>
<div class="t" style="left:2179.40px;top:1172.90px;font-size:18.00px;line-height:20px;color:#333;letter-spacing:-0.877px;">contributors</div>
<div class="a" style="left:1602px;top:940px;width:40px;height:26px;border-radius:50%;background:rgba(0,0,0,0.32);filter:blur(7px);transform:rotate(-40deg);"></div>
<svg class="a" style="left:1575.0px;top:913.0px;" width="50.0" height="65.0" viewBox="0 0 50 65"><path d="M24.5 2.5 C14 2.5 5.5 11 5.5 21 C5.5 33 24.5 60 24.5 60 C24.5 60 43 33 43 21 C43 11 35 2.5 24.5 2.5Z" fill="#2a81cb" stroke="#1a5e9a" stroke-width="1.3"/><circle cx="24.5" cy="20" r="7" fill="#fff"/></svg>
<div class="a " style="left:1343.5px;top:358.0px;width:510.5px;height:545.5px;background:#fff;border-radius:18px;box-shadow:0 4px 20px rgba(0,0,0,0.35);"></div>
<svg class="a" style="left:1579.0px;top:900.0px;" width="41.0" height="22.0" viewBox="0 0 41 22"><path d="M0 2 L41 2 L20.5 21Z" fill="#fff"/></svg>
<svg class="a" style="left:1826.0px;top:368.0px;" width="18.0" height="18.0" viewBox="0 0 18 18"><path d="M3 3 L15 15 M15 3 L3 15" stroke="#c3c3c3" stroke-width="2.4"/></svg>
<div class="t" style="left:1372px;top:382.00px;font-size:18px;line-height:21px;color:#333"><b>Catalog Number #1</b>: 144344</div>
<div class="t" style="left:1372px;top:407.18px;font-size:18px;line-height:21px;color:#333"><b>Catalog Number #1</b>: 144231</div>
<div class="t" style="left:1372px;top:432.36px;font-size:18px;line-height:21px;color:#333"><b>Catalog Number #1</b>: 144109</div>
<div class="t" style="left:1372px;top:457.54px;font-size:18px;line-height:21px;color:#333"><b>Collector Number #1</b>: 670</div>
<div class="t" style="left:1372px;top:482.72px;font-size:18px;line-height:21px;color:#333"><b>Collector Number #2</b>: 763</div>
<div class="t" style="left:1372px;top:507.90px;font-size:18px;line-height:21px;color:#333"><b>Collector Number #3</b>: 695</div>
<div class="t" style="left:1372px;top:533.08px;font-size:18px;line-height:21px;color:#333"><b>Species fullname</b>: Oryzomys perenensis</div>
<div class="t" style="left:1372px;top:558.26px;font-size:18px;line-height:21px;color:#333"><b>Subspecies fullname</b>: Glossophaga soricina soricina</div>
<div class="t" style="left:1372px;top:583.44px;font-size:18px;line-height:21px;color:#333"><b>Species fullname</b>: Micoureus regina</div>
<div class="t" style="left:1372px;top:608.62px;font-size:18px;line-height:21px;color:#333"><b>Agent Last Name</b>: SCHMIDT C A</div>
<div class="t" style="left:1372px;top:633.80px;font-size:18px;line-height:21px;color:#333"><b>Agent Last Name</b>: WOODMAN N</div>
<div class="t" style="left:1372px;top:658.98px;font-size:18px;line-height:21px;color:#333"><b>Agent Last Name</b>: WOODMAN N</div>
<div class="t" style="left:1372px;top:684.16px;font-size:18px;line-height:21px;color:#333"><b>Start Date #1</b>: 1989-06-12</div>
<div class="t" style="left:1372px;top:709.34px;font-size:18px;line-height:21px;color:#333"><b>Start Date #2</b>: 1990-03-03</div>
<div class="t" style="left:1372px;top:734.52px;font-size:18px;line-height:21px;color:#333"><b>Start Date #3</b>: 1990-02-09</div>
<div class="t" style="left:1372px;top:759.70px;font-size:18px;line-height:21px;color:#333"><b>Locality Name</b>: PUERTO MALDONADO, 14 KM E OF;</div>
<div class="t" style="left:1372px;top:784.88px;font-size:18px;line-height:21px;color:#333"><b></b>RESERVA CUZCO AMAZONICO</div>
<div class="t" style="left:1372px;top:810.06px;font-size:18px;line-height:21px;color:#333"><b>State fullname</b>: PERU, MADRE DE DIOS</div>
<div class="t" style="left:1372px;top:835.24px;font-size:18px;line-height:21px;color:#333"><b>Latitude1</b>: -12.6</div>
<div class="t" style="left:1372px;top:860.42px;font-size:18px;line-height:21px;color:#333"><b>Longitude1</b>: -69.05</div>
</body></html>
